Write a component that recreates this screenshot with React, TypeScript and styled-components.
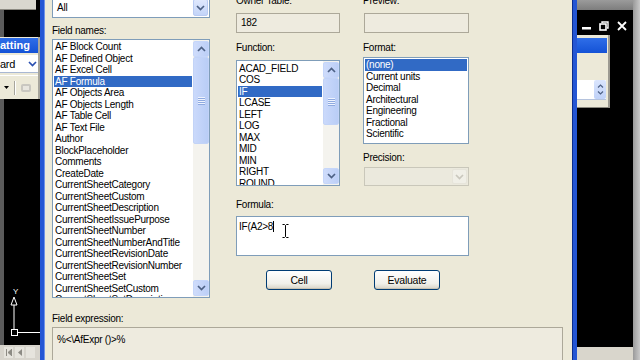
import React from 'react';
import styled, { createGlobalStyle } from 'styled-components';

const Global = createGlobalStyle`
  html, body { margin: 0; padding: 0; width: 640px; height: 360px; overflow: hidden; background: #000; }
  #root { width: 640px; height: 360px; }
  * { box-sizing: border-box; }
`;

const FONT = `"Liberation Sans", Arial, sans-serif`;
const BEIGE = '#ECE9D8';

const Screen = styled.div`
  display: flex;
  width: 640px;
  height: 360px;
  overflow: hidden;
  font-family: ${FONT};
  font-size: 10px;
  letter-spacing: -0.25px;
  color: #000;
`;

/* ---------- left AutoCAD background ---------- */
const LeftBg = styled.div`
  width: 40px;
  flex: none;
  display: flex;
  flex-direction: column;
  background: #000;
`;
const ToolStub = styled.div`
  height: 10px;
  margin-right: 4px;
  background: #d9d7cf;
  border-bottom: 1px solid #8c8a82;
`;
const BlackStrip = styled.div<{ $h?: number }>`
  height: ${(p) => (p.$h ? `${p.$h}px` : 'auto')};
  flex: ${(p) => (p.$h ? 'none' : '1')};
  border-left: 4px solid #5b5b5b;
  background: #000;
  display: flex;
  flex-direction: column;
  justify-content: flex-end;
`;
const SidePanel = styled.div`
  height: 62px;
  background: ${BEIGE};
  border-right: 2px solid #a7a59c;
  display: flex;
  flex-direction: column;
`;
const PanelTitle = styled.div`
  height: 15px;
  margin-top: 1px;
  background: linear-gradient(#2f6ee8, #1452d6);
  color: #fff;
  font-weight: bold;
  font-size: 11px;
  letter-spacing: 0;
  line-height: 15px;
  white-space: nowrap;
  overflow: hidden;
  text-indent: 0;
`;
const PanelCombo = styled.div`
  margin-top: 2px;
  height: 18px;
  background: #fff;
  border-bottom: 1px solid #a9b8d3;
  display: flex;
  align-items: center;
  justify-content: space-between;
  padding-right: 1px;
  font-size: 11px;
`;
const PanelTools = styled.div`
  flex: 1;
  display: flex;
  align-items: center;
  gap: 5px;
  padding-left: 4px;
  margin-top: 2px;
  border-top: 1px solid #fff;
`;
const ToolSep = styled.div`
  width: 1px;
  height: 14px;
  background: #a7a59c;
  box-shadow: 1px 0 #fff;
`;
const NavBar = styled.div`
  height: 15px;
  background: #d7d4cc;
  display: flex;
  align-items: center;
  gap: 2px;
  padding-left: 4px;
`;
const NavBtn = styled.div`
  width: 9px;
  height: 11px;
  display: flex;
  align-items: center;
  justify-content: center;
  background: #e6e4dd;
`;

/* ---------- dialog ---------- */
const Dialog = styled.div`
  width: 537px;
  flex: none;
  background: ${BEIGE};
  border-left: 4px solid #2456d4;
  border-right: 4px solid #2456d4;
  box-shadow: inset 1px 0 #6e92e8, inset -1px 0 #0b2d8f;
  overflow: hidden;
`;
const Body = styled.div`
  margin-top: -6px;
  padding: 0 10px 0 8px;
  display: flex;
  flex-direction: column;
`;
const TopArea = styled.div`
  display: flex;
  gap: 26px;
`;
const Column = styled.div<{ $w: number }>`
  width: ${(p) => p.$w}px;
  flex: none;
  display: flex;
  flex-direction: column;
`;
const Cols = styled.div`
  display: flex;
  gap: 23px;
`;
const Label = styled.div<{ $mt?: number }>`
  height: 13px;
  line-height: 13px;
  margin-top: ${(p) => p.$mt ?? 0}px;
  white-space: nowrap;
`;
const ReadBox = styled.div<{ $mt?: number; $ml?: number }>`
  height: 20px;
  margin-top: ${(p) => p.$mt ?? 0}px;
  margin-left: ${(p) => p.$ml ?? 0}px;
  background: #eeebdf;
  border: 1px solid #aca899;
  padding-left: 4px;
  line-height: 18px;
`;
const ComboBox = styled.div<{ $mt?: number; $h: number; $disabled?: boolean; $ml?: number }>`
  height: ${(p) => p.$h}px;
  margin-top: ${(p) => p.$mt ?? 0}px;
  margin-left: ${(p) => p.$ml ?? 0}px;
  background: ${(p) => (p.$disabled ? '#ebe9dd' : '#fff')};
  border: 1px solid ${(p) => (p.$disabled ? '#c9c7ba' : '#7f9db9')};
  display: flex;
  align-items: center;
  justify-content: space-between;
  padding: 1px 1px 1px 4px;
`;
const DropBtn = styled.div<{ $disabled?: boolean }>`
  width: 15px;
  align-self: stretch;
  border-radius: 2px;
  border: 1px solid ${(p) => (p.$disabled ? '#e6e4da' : '#b9cbf3')};
  background: ${(p) => (p.$disabled ? '#f0efe7' : 'linear-gradient(#dfe8fd, #c3d4f8)')};
  display: flex;
  align-items: center;
  justify-content: center;
`;
const ListBox = styled.div<{ $h: number; $mt?: number }>`
  height: ${(p) => p.$h}px;
  margin-top: ${(p) => p.$mt ?? 0}px;
  background: #fff;
  border: 1px solid #7f9db9;
  display: flex;
  overflow: hidden;
`;
const Items = styled.div<{ $pt: number }>`
  flex: 1;
  min-width: 0;
  padding-top: ${(p) => p.$pt}px;
  overflow: hidden;
`;
const Item = styled.div<{ $sel?: boolean }>`
  height: 11.5px;
  line-height: 11.5px;
  margin: 0 1px;
  padding-left: 1px;
  white-space: nowrap;
  overflow: hidden;
  background: ${(p) => (p.$sel ? '#316ac5' : 'transparent')};
  color: ${(p) => (p.$sel ? '#fff' : '#000')};
`;
const ScrollBar = styled.div`
  width: 16px;
  flex: none;
  display: flex;
  flex-direction: column;
  background: #f4f3ee;
  padding: 1px 0;
`;
const SBtn = styled.div`
  height: 16px;
  flex: none;
  border-radius: 2px;
  border: 1px solid #c5d6fa;
  background: linear-gradient(90deg, #cfdcfb, #bccff7);
  display: flex;
  align-items: center;
  justify-content: center;
`;
const Thumb = styled.div<{ $h: number }>`
  height: ${(p) => p.$h}px;
  flex: none;
  border-radius: 2px;
  border: 1px solid #c2d3f7;
  background: linear-gradient(90deg, #cad9fb, #b9cdf6);
  display: flex;
  flex-direction: column;
  align-items: center;
  justify-content: center;
  gap: 1px;
`;
const Grip = styled.div`
  width: 7px;
  height: 1px;
  background: #eef3fe;
  box-shadow: 0 1px #8faae0;
`;
const Track = styled.div`
  flex: 1;
`;
const FormulaBox = styled.div`
  position: relative;
  height: 40px;
  margin-top: 5px;
  background: #fff;
  border: 1px solid #7f9db9;
  padding: 3px 2px;
  line-height: 13px;
  display: flex;
  align-items: flex-start;
`;
const Caret = styled.span`
  display: inline-block;
  width: 1px;
  height: 11px;
  margin-top: 1px;
  background: #000;
`;
const IBeam = styled.svg`
  position: absolute;
  left: 45px;
  top: 7px;
`;
const ButtonRow = styled.div`
  display: flex;
  gap: 42px;
  margin-top: 14px;
  padding-left: 30px;
`;
const XPButton = styled.div`
  width: 66px;
  height: 20px;
  border: 1px solid #003c74;
  border-radius: 3px;
  background: linear-gradient(#ffffff, #f1f0ea 70%, #d8d3c6);
  box-shadow: inset 0 -1px #c7c2b3;
  display: flex;
  align-items: center;
  justify-content: center;
  font-size: 10.5px;
`;
const ExprBox = styled.div`
  height: 50px;
  margin-top: 2px;
  background: #eeebdf;
  border: 1px solid #aca899;
  padding: 5px 4px;
  line-height: 13px;
`;

/* ---------- right AutoCAD background ---------- */
const RightBg = styled.div`
  flex: 1;
  display: flex;
  background: #000;
`;
const RightMain = styled.div`
  flex: 1;
  display: flex;
  flex-direction: column;
`;
const RightEdge = styled.div`
  width: 7px;
  background: linear-gradient(90deg, #9a9a9a, #c9c9c9);
`;
const TitleStrip = styled.div`
  height: 10px;
  background: linear-gradient(#9b9b9b, #7d7d7d);
`;
const RightBlack = styled.div`
  flex: 1;
  background: #000;
  display: flex;
  flex-direction: column;
`;
const WinButtons = styled.div`
  display: flex;
  align-items: center;
  gap: 8px;
  height: 14px;
  margin-top: 9px;
  padding-left: 5px;
`;
const MiniPanel = styled.div`
  width: 33px;
  height: 73px;
  margin-top: 2px;
  background: ${BEIGE};
  border-right: 2px solid #9c9a92;
  border-bottom: 1px solid #8a887f;
  display: flex;
  flex-direction: column;
`;
const MiniTitle = styled.div`
  height: 15px;
  margin-top: 3px;
  margin-right: 1px;
  background: linear-gradient(#2f6ee8, #1452d6);
`;
const MiniField = styled.div`
  height: 20px;
  margin-top: 27px;
  margin-right: 2px;
  background: #fff;
  border-bottom: 1px solid #b5c3dd;
  display: flex;
  justify-content: flex-end;
`;
const Spinner = styled.div`
  width: 12px;
  display: flex;
  flex-direction: column;
  justify-content: center;
  align-items: center;
  gap: 3px;
  background: linear-gradient(#dae5fd, #bfd1f8);
  border-radius: 2px;
`;
const BottomStrip = styled.div`
  height: 13px;
  background: #d9d6cc;
`;

const Chevron = ({ dir, color = '#4d6185' }: { dir: 'up' | 'down'; color?: string }) => (
  <svg width="9" height="6" viewBox="0 0 9 6">
    <path
      d={dir === 'up' ? 'M1 5 L4.5 1.5 L8 5' : 'M1 1 L4.5 4.5 L8 1'}
      fill="none"
      stroke={color}
      strokeWidth="1.7"
    />
  </svg>
);

const Scroll = ({ thumb, before }: { thumb: number; before: number }) => (
  <ScrollBar>
    <SBtn>
      <Chevron dir="up" />
    </SBtn>
    {before > 0 && <div style={{ height: before, flex: 'none' }} />}
    <Thumb $h={thumb}>
      <Grip />
      <Grip />
      <Grip />
      <Grip />
    </Thumb>
    <Track />
    <SBtn>
      <Chevron dir="down" />
    </SBtn>
  </ScrollBar>
);

const fieldNames = [
  'AF Block Count',
  'AF Defined Object',
  'AF Excel Cell',
  'AF Formula',
  'AF Objects Area',
  'AF Objects Length',
  'AF Table Cell',
  'AF Text File',
  'Author',
  'BlockPlaceholder',
  'Comments',
  'CreateDate',
  'CurrentSheetCategory',
  'CurrentSheetCustom',
  'CurrentSheetDescription',
  'CurrentSheetIssuePurpose',
  'CurrentSheetNumber',
  'CurrentSheetNumberAndTitle',
  'CurrentSheetRevisionDate',
  'CurrentSheetRevisionNumber',
  'CurrentSheetSet',
  'CurrentSheetSetCustom',
  'CurrentSheetSetDescription',
];
const functions = ['ACAD_FIELD', 'COS', 'IF', 'LCASE', 'LEFT', 'LOG', 'MAX', 'MID', 'MIN', 'RIGHT', 'ROUND'];
const formats = ['(none)', 'Current units', 'Decimal', 'Architectural', 'Engineering', 'Fractional', 'Scientific'];

export default function App() {
  return (
    <>
      <Global />
      <Screen>
        <LeftBg>
          <ToolStub />
          <BlackStrip $h={27} />
          <SidePanel>
            <PanelTitle>atting</PanelTitle>
            <PanelCombo>
              <span>ard</span>
              <Chevron dir="down" color="#2a4fb0" />
            </PanelCombo>
            <PanelTools>
              <svg width="5" height="3" viewBox="0 0 5 3">
                <path d="M0 0 H5 L2.5 3 Z" fill="#000" />
              </svg>
              <ToolSep />
              <svg width="12" height="10" viewBox="0 0 12 10">
                <rect x="1" y="1" width="10" height="8" rx="2" fill="#c9c7c0" />
                <rect x="3" y="3" width="6" height="4" fill="#e8e6df" />
              </svg>
            </PanelTools>
          </SidePanel>
          <BlackStrip>
            <svg width="36" height="50" viewBox="0 0 36 50">
              <text x="9" y="7" fill="#fff" fontSize="8" fontFamily="Liberation Sans, sans-serif">
                Y
              </text>
              <path d="M10 10 L7 18 H13 Z" fill="none" stroke="#fff" strokeWidth="1" />
              <path d="M10 18 V42" stroke="#fff" strokeWidth="1" />
              <rect x="7.5" y="42.5" width="6" height="6" fill="none" stroke="#fff" strokeWidth="1" />
              <path d="M13.5 45.5 H36" stroke="#fff" strokeWidth="1" />
            </svg>
            <div style={{ height: 8 }} />
          </BlackStrip>
          <NavBar>
            <NavBtn>
              <svg width="6" height="7" viewBox="0 0 6 7">
                <path d="M0.5 0 V7 M6 0 L2 3.5 L6 7 Z" stroke="#8d8b84" fill="#8d8b84" />
              </svg>
            </NavBtn>
            <NavBtn>
              <svg width="5" height="7" viewBox="0 0 5 7">
                <path d="M5 0 L1 3.5 L5 7 Z" fill="#8d8b84" />
              </svg>
            </NavBtn>
            <NavBtn />
          </NavBar>
        </LeftBg>

        <Dialog>
          <Body>
            <TopArea>
              <Column $w={158}>
                <ComboBox $mt={3} $h={21}>
                  <span>All</span>
                  <DropBtn>
                    <Chevron dir="down" />
                  </DropBtn>
                </ComboBox>
                <Label $mt={6}>Field names:</Label>
                <ListBox $h={259} $mt={2}>
                  <Items $pt={1}>
                    {fieldNames.map((n) => (
                      <Item key={n} $sel={n === 'AF Formula'}>
                        {n}
                      </Item>
                    ))}
                  </Items>
                  <Scroll before={0} thumb={87} />
                </ListBox>
              </Column>

              <Column $w={233}>
                <Cols>
                  <Column $w={104}>
                    <Label>Owner Table:</Label>
                    <ReadBox $mt={6}>182</ReadBox>
                    <Label $mt={8}>Function:</Label>
                    <ListBox $h={126} $mt={6}>
                      <Items $pt={1.5}>
                        {functions.map((n) => (
                          <Item key={n} $sel={n === 'IF'}>
                            {n}
                          </Item>
                        ))}
                      </Items>
                      <Scroll before={0} thumb={47} />
                    </ListBox>
                  </Column>
                  <Column $w={106}>
                    <Label $mt={0}>Preview:</Label>
                    <ReadBox $mt={6} $ml={1} />
                    <Label $mt={8}>Format:</Label>
                    <ListBox $h={87} $mt={3}>
                      <Items $pt={1}>
                        {formats.map((n) => (
                          <Item key={n} $sel={n === '(none)'}>
                            {n}
                          </Item>
                        ))}
                      </Items>
                    </ListBox>
                    <Label $mt={7}>Precision:</Label>
                    <ComboBox $mt={3} $h={19} $disabled $ml={1}>
                      <span />
                      <DropBtn $disabled>
                        <Chevron dir="down" color="#c9c7bd" />
                      </DropBtn>
                    </ComboBox>
                  </Column>
                </Cols>
                <Label $mt={12}>Formula:</Label>
                <FormulaBox>
                  <span>IF(A2&gt;8</span>
                  <Caret />
                  <IBeam width="7" height="14" viewBox="0 0 7 14">
                    <path d="M0.5 0.5 H2.5 L3.5 1.5 L4.5 0.5 H6.5 M3.5 1.5 V12.5 M0.5 13.5 H2.5 L3.5 12.5 L4.5 13.5 H6.5" fill="none" stroke="#000" strokeWidth="1" />
                  </IBeam>
                </FormulaBox>
                <ButtonRow>
                  <XPButton>Cell</XPButton>
                  <XPButton>Evaluate</XPButton>
                </ButtonRow>
              </Column>
            </TopArea>
            <Label $mt={14}>Field expression:</Label>
            <ExprBox>%&lt;\AfExpr ()&gt;%</ExprBox>
          </Body>
        </Dialog>

        <RightBg>
          <RightMain>
            <TitleStrip />
            <RightBlack>
              <WinButtons>
                <svg width="9" height="10" viewBox="0 0 9 10">
                  <rect x="0" y="6" width="9" height="2.5" fill="#fff" />
                </svg>
                <svg width="10" height="10" viewBox="0 0 10 10">
                  <rect x="1" y="3" width="6" height="6" fill="none" stroke="#fff" strokeWidth="1.6" />
                  <path d="M3 2 V1 H9 V7 H8" fill="none" stroke="#fff" strokeWidth="1.4" />
                </svg>
                <svg width="10" height="10" viewBox="0 0 10 10">
                  <path d="M1 1 L9 9 M9 1 L1 9" stroke="#fff" strokeWidth="1.8" />
                </svg>
              </WinButtons>
              <MiniPanel>
                <MiniTitle />
                <MiniField>
                  <Spinner>
                    <svg width="7" height="4" viewBox="0 0 7 4">
                      <path d="M1 3.5 L3.5 1 L6 3.5" fill="none" stroke="#4d6185" strokeWidth="1.2" />
                    </svg>
                    <svg width="7" height="4" viewBox="0 0 7 4">
                      <path d="M1 0.5 L3.5 3 L6 0.5" fill="none" stroke="#4d6185" strokeWidth="1.2" />
                    </svg>
                  </Spinner>
                </MiniField>
              </MiniPanel>
            </RightBlack>
            <BottomStrip />
          </RightMain>
          <RightEdge />
        </RightBg>
      </Screen>
    </>
  );
}
